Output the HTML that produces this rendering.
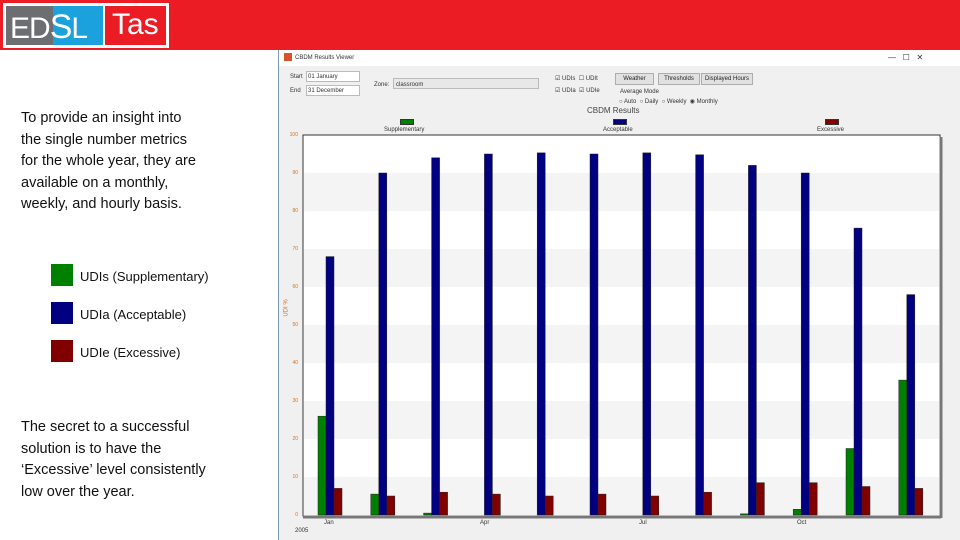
<!DOCTYPE html>
<html><head><meta charset="utf-8"><style>
*{margin:0;padding:0;box-sizing:border-box}
body{width:960px;height:540px;position:relative;overflow:hidden;background:#fff;font-family:"Liberation Sans",sans-serif}
.abs{position:absolute}
.txt{font-size:14.5px;line-height:21.5px;color:#111;font-family:"Liberation Sans",sans-serif;white-space:nowrap}
.leg{position:absolute;left:51px;width:22px;height:22px}
.legt{position:absolute;left:80px;font-size:13px;color:#111}
.small{font-size:6px;color:#333;position:absolute}
.btn{position:absolute;top:73px;height:12px;background:#e1e1e1;border:1px solid #adadad;font-size:6px;text-align:center;line-height:10px;color:#222}
.yl{position:absolute;left:284px;font-size:5px;color:#d07020;width:14px;text-align:right}
</style></head><body>
<div class="abs" style="left:0;top:0;width:960px;height:50px;background:#ec1c24"></div>
<div class="abs" style="left:3px;top:3px;width:166px;height:45px;background:#fff"></div>
<div class="abs" style="left:6px;top:6px;width:97px;height:39px;background:#6d6e71"></div>
<div class="abs" style="left:53px;top:6px;width:50px;height:39px;background:#1ba1dc"></div>
<div class="abs" style="left:105px;top:6px;width:61px;height:39px;background:#ec1c24"></div>
<div class="abs" style="left:10px;top:8px;font-size:30px;color:#fff;letter-spacing:-1px">ED<span style="font-size:34px">S</span>L</div>
<div class="abs" style="left:112px;top:8px;font-size:30px;color:#fff">Tas</div>

<div class="abs txt" style="left:21px;top:108px">To provide an insight into<br>the single number metrics<br>for the whole year, they are<br>available on a monthly,<br>weekly, and hourly basis.</div>
<div class="leg" style="top:264px;background:#008000"></div><div class="legt" style="top:269px">UDIs (Supplementary)</div>
<div class="leg" style="top:302px;background:#000080"></div><div class="legt" style="top:307px">UDIa (Acceptable)</div>
<div class="leg" style="top:340px;background:#800000"></div><div class="legt" style="top:345px">UDIe (Excessive)</div>
<div class="abs txt" style="left:21px;top:417px">The secret to a successful<br>solution is to have the<br>‘Excessive’ level consistently<br>low over the year.</div>

<div class="abs" style="left:278px;top:50px;width:682px;height:490px;background:#f0f0f0;border-left:1px solid #7a9ab8"></div>
<div class="abs" style="left:279px;top:50px;width:681px;height:16px;background:#fff"></div>
<div class="abs" style="left:284px;top:53px;width:8px;height:8px;background:#d9532a"></div>
<div class="small" style="left:295px;top:55px">CBDM Results Viewer</div>
<div class="small" style="left:888px;top:53px;font-size:8px">—&nbsp;&nbsp;&nbsp;☐&nbsp;&nbsp;&nbsp;✕</div>
<div class="small" style="left:290px;top:74px">Start</div><div class="abs" style="left:306px;top:71px;width:54px;height:11px;background:#fff;border:1px solid #bbb"></div><div class="small" style="left:308px;top:74px">01 January</div>
<div class="small" style="left:290px;top:88px">End</div><div class="abs" style="left:306px;top:85px;width:54px;height:11px;background:#fff;border:1px solid #bbb"></div><div class="small" style="left:308px;top:88px">31 December</div>
<div class="small" style="left:374px;top:82px">Zone:</div><div class="abs" style="left:393px;top:78px;width:146px;height:11px;background:#e8e8e8;border:1px solid #bbb"></div><div class="small" style="left:396px;top:82px">classroom</div>
<div class="small" style="left:555px;top:75px">☑ UDIs &nbsp;☐ UDIt</div>
<div class="small" style="left:555px;top:87px">☑ UDIa &nbsp;☑ UDIe</div>
<div class="btn" style="left:615px;width:39px">Weather</div>
<div class="btn" style="left:658px;width:42px">Thresholds</div>
<div class="btn" style="left:701px;width:52px">Displayed Hours</div>
<div class="small" style="left:620px;top:89px">Average Mode</div>
<div class="small" style="left:619px;top:98px">○ Auto &nbsp;○ Daily &nbsp;○ Weekly &nbsp;◉ Monthly</div>
<div class="abs" style="left:587px;top:106px;font-size:8px;color:#444">CBDM Results</div>
<div class="abs" style="left:400px;top:119px;width:14px;height:6px;background:#008000;border:1px solid #333"></div><div class="small" style="left:384px;top:127px">Supplementary</div>
<div class="abs" style="left:613px;top:119px;width:14px;height:6px;background:#000080;border:1px solid #333"></div><div class="small" style="left:603px;top:127px">Acceptable</div>
<div class="abs" style="left:825px;top:119px;width:14px;height:6px;background:#800000;border:1px solid #333"></div><div class="small" style="left:817px;top:127px">Excessive</div>
<div class="abs" style="left:278px;top:305px;font-size:6px;color:#d07020;transform:rotate(-90deg)">UDI %</div>

<svg class="abs" style="left:0;top:0" width="960" height="540">
<rect x="303" y="135" width="637" height="381" fill="#fff" stroke="#333" stroke-width="1"/>
<g fill="#f4f4f4">
<rect x="304" y="173" width="635" height="38"/><rect x="304" y="249" width="635" height="38"/><rect x="304" y="325" width="635" height="38"/><rect x="304" y="401" width="635" height="38"/><rect x="304" y="477" width="635" height="38"/>
</g>
<line x1="303" y1="517" x2="941" y2="517" stroke="#777" stroke-width="3"/>
<line x1="941" y1="137" x2="941" y2="518" stroke="#777" stroke-width="3"/>
<g id="bars"></g>
</svg>
<div class="yl" style="top:132px">100</div><div class="yl" style="top:170px">90</div><div class="yl" style="top:208px">80</div><div class="yl" style="top:246px">70</div><div class="yl" style="top:284px">60</div><div class="yl" style="top:322px">50</div><div class="yl" style="top:360px">40</div><div class="yl" style="top:398px">30</div><div class="yl" style="top:436px">20</div><div class="yl" style="top:474px">10</div><div class="yl" style="top:512px">0</div>
<div class="small" style="left:324px;top:520px">Jan</div><div class="small" style="left:480px;top:520px">Apr</div><div class="small" style="left:639px;top:520px">Jul</div><div class="small" style="left:797px;top:520px">Oct</div>
<div class="small" style="left:295px;top:528px">2005</div>
<script>
var g=[26,5.5,0.5,0,0,0,0,0,0.3,1.5,17.5,35.5],b=[68,90,94,95,95.3,95,95.3,94.8,92,90,75.5,58],r=[7,5,6,5.5,5,5.5,5,6,8.5,8.5,7.5,7];
var s='';for(var i=0;i<12;i++){var x=318+52.8*i;[[g,'#008000',0],[b,'#000080',8],[r,'#800000',16]].forEach(function(a){var v=a[0][i];if(v>0){var h=v*3.8;s+='<rect x="'+(x+a[2])+'" y="'+(515-h)+'" width="8" height="'+h+'" fill="'+a[1]+'" stroke="#222" stroke-width="0.5"/>';}});}
document.getElementById('bars').innerHTML=s;
</script>
</body></html>
